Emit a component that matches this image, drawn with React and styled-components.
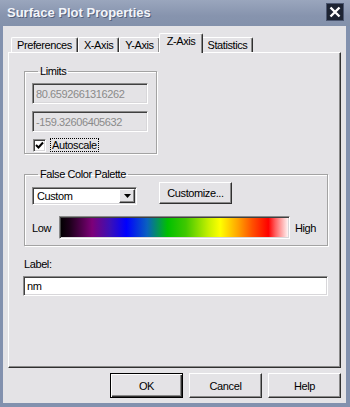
import React from 'react';
import styled, { createGlobalStyle, css } from 'styled-components';

const Global = createGlobalStyle`
  html, body { margin: 0; padding: 0; background: #8190ad; }
  body { font-family: "Liberation Sans", Arial, sans-serif; font-size: 11px; color: #000; }
  * { box-sizing: border-box; }
`;

const Window = styled.div`
  width: 350px;
  height: 407px;
  display: flex;
  flex-direction: column;
  background: #8291ae;
`;

const TitleBar = styled.div`
  height: 26px;
  flex: none;
  display: flex;
  align-items: center;
  justify-content: space-between;
  padding: 0 6px 2px 7px;
  background: linear-gradient(#9aa6bd, #8794ae 60%, #8391ab);
`;

const Title = styled.div`
  font: bold 13px "Liberation Sans", Arial, sans-serif;
  color: #f3f5fa;
  text-shadow: 1px 1px 0 #56627c;
`;

const CloseBtn = styled.div`
  width: 18px;
  height: 18px;
  background: #1d2433;
  border: 1px solid #4b5670;
  display: flex;
  align-items: center;
  justify-content: center;
`;

const Body = styled.div`
  flex: 1;
  margin: 0 4px 4px 3px;
  background: #e4e3e6;
  display: flex;
  flex-direction: column;
  padding: 7px 5px 5px 5px;
  letter-spacing: -0.4px;
`;

const TabRow = styled.div`
  height: 19px;
  flex: none;
  display: flex;
  align-items: flex-end;
  padding-left: 3px;
`;

const Tab = styled.div`
  height: 15px;
  padding: 0 5px;
  line-height: 14px;
  background: #e4e3e6;
  border-top: 1px solid #fff;
  border-left: 1px solid #fff;
  border-right: 1px solid #303030;
  box-shadow: inset -1px 0 #8a8a8a;
  border-radius: 2px 2px 0 0;
  white-space: nowrap;
  ${p => p.$active && css`
    height: 20px;
    margin: 0 -2px -1px -1px;
    padding: 0 7px 4px;
    line-height: 14px;
    position: relative;
    z-index: 1;
  `}
`;

const Panel = styled.div`
  flex: 1;
  border: 1px solid #fff;
  border-right-color: #303030;
  border-bottom-color: #303030;
  box-shadow: inset -1px -1px #8a8a8a;
  padding: 12px 13px 0 15px;
  display: flex;
  flex-direction: column;
  align-items: flex-start;
`;

const Group = styled.fieldset`
  margin: ${p => p.$mt || 0}px 0 0 0;
  width: ${p => p.$w}px;
  border: 1px solid #a3a3a3;
  box-shadow: inset 1px 1px #fff, 1px 1px #fff;
  padding: ${p => p.$pad};
  min-width: 0;
`;

const Legend = styled.legend`
  margin-left: 6px;
  padding: 0 2px;
  line-height: 12px;
  font-size: 11px;
`;

const Column = styled.div`
  display: flex;
  flex-direction: column;
  gap: ${p => p.$gap || 0}px;
`;

const Sunken = css`
  border: 1px solid;
  border-color: #8a8a8a #fff #fff #8a8a8a;
  box-shadow: inset 1px 1px #404040, inset -1px -1px #d8d7da;
`;

const TextBox = styled.div`
  ${Sunken}
  width: ${p => p.$w}px;
  height: ${p => p.$h}px;
  margin-left: ${p => p.$ml || 0}px;
  margin-top: ${p => p.$mt || 0}px;
  background: ${p => (p.$disabled ? '#e4e3e6' : '#fff')};
  color: ${p => (p.$disabled ? '#8a8a8a' : '#000')};
  display: flex;
  align-items: center;
  padding-left: 3px;
  font-size: 11px;
`;

const CheckRow = styled.div`
  display: flex;
  align-items: center;
  gap: 4px;
  margin-top: 6px;
  height: 14px;
  margin-left: 1px;
`;

const CheckBox = styled.div`
  ${Sunken}
  width: 13px;
  height: 13px;
  background: #fff;
  display: flex;
  align-items: center;
  justify-content: center;
`;

const FocusLabel = styled.span`
  border: 1px dotted #000;
  padding: 0 1px;
  line-height: 12px;
`;

const Row = styled.div`
  display: flex;
  align-items: ${p => p.$align || 'center'};
  margin-top: ${p => p.$mt || 0}px;
`;

const Select = styled.div`
  ${Sunken}
  width: 105px;
  height: 18px;
  margin-top: 5px;
  background: #fff;
  display: flex;
  align-items: center;
  justify-content: space-between;
  padding: 0 1px 0 4px;
  font-size: 11px;
`;

const ArrowBtn = styled.div`
  width: 16px;
  height: 14px;
  background: #e4e3e6;
  border: 1px solid;
  border-color: #fff #303030 #303030 #fff;
  box-shadow: inset -1px -1px #8a8a8a;
  display: flex;
  align-items: center;
  justify-content: center;
`;

const Button = styled.div`
  width: ${p => p.$w || 73}px;
  height: ${p => p.$h || 25}px;
  margin-left: ${p => p.$ml || 0}px;
  background: #e4e3e6;
  border: 1px solid;
  border-color: #fff #303030 #303030 #fff;
  box-shadow: inset -1px -1px #8a8a8a;
  display: flex;
  align-items: center;
  justify-content: center;
  font-size: 11px;
  ${p => p.$default && css`
    border: 1px solid #000;
    box-shadow: inset 1px 1px #fff, inset -1px -1px #303030, inset -2px -2px #8a8a8a;
  `}
`;

const SideLabel = styled.span`
  width: ${p => p.$w || 'auto'};
  margin-left: ${p => p.$ml || 0}px;
  font-size: 11px;
`;

const Gradient = styled.div`
  ${Sunken}
  width: 231px;
  height: 23px;
  background: linear-gradient(
    to right,
    #000 0%,
    #1a0018 4%,
    #7d0078 14%,
    #3a10b8 22%,
    #0000ff 29%,
    #0a60c0 38%,
    #00c000 47%,
    #40c800 55%,
    #c8f000 65%,
    #ffff00 70%,
    #ffa000 78%,
    #ff5000 84%,
    #ff0000 91%,
    #ff6060 94%,
    #ffffff 100%
  );
`;

const FieldLabel = styled.div`
  margin-top: 12px;
  font-size: 11px;
  line-height: 13px;
`;

const ButtonRow = styled.div`
  flex: none;
  height: 25px;
  margin-top: 5px;
  display: flex;
  justify-content: flex-end;
  gap: 6px;
`;

export default function App() {
  return (
    <>
      <Global />
      <Window>
        <TitleBar>
          <Title>Surface Plot Properties</Title>
          <CloseBtn>
            <svg width="12" height="12" viewBox="0 0 12 12">
              <path d="M1.5 1.5 L10.5 10.5 M10.5 1.5 L1.5 10.5" stroke="#fff" strokeWidth="2.4" />
            </svg>
          </CloseBtn>
        </TitleBar>
        <Body>
          <TabRow>
            <Tab>Preferences</Tab>
            <Tab>X-Axis</Tab>
            <Tab>Y-Axis</Tab>
            <Tab $active>Z-Axis</Tab>
            <Tab>Statistics</Tab>
          </TabRow>
          <Panel>
            <Group $w={133} $pad="6px 7px 1px 7px">
              <Legend>Limits</Legend>
              <Column $gap={7}>
                <TextBox $disabled $w={116} $h={21}>80.6592661316262</TextBox>
                <TextBox $disabled $w={116} $h={21}>-159.32606405632</TextBox>
              </Column>
              <CheckRow>
                <CheckBox>
                  <svg width="9" height="9" viewBox="0 0 9 9">
                    <path d="M1 4 L3.5 6.5 L8 1.5" stroke="#000" strokeWidth="2" fill="none" />
                  </svg>
                </CheckBox>
                <FocusLabel>Autoscale</FocusLabel>
              </CheckRow>
            </Group>
            <Group $w={304} $mt={14} $pad="2px 7px 6px 7px">
              <Legend>False Color Palette</Legend>
              <Row $align="flex-start">
                <Select>
                  <span>Custom</span>
                  <ArrowBtn>
                    <svg width="7" height="4" viewBox="0 0 7 4">
                      <path d="M0 0 H7 L3.5 4 Z" fill="#000" />
                    </svg>
                  </ArrowBtn>
                </Select>
                <Button $w={73} $h={22} $ml={22}>Customize...</Button>
              </Row>
              <Row $mt={11}>
                <SideLabel $w="27px">Low</SideLabel>
                <Gradient />
                <SideLabel $ml={5}>High</SideLabel>
              </Row>
            </Group>
            <FieldLabel>Label:</FieldLabel>
            <TextBox $w={305} $h={20} $ml={-1} $mt={5}>nm</TextBox>
          </Panel>
          <ButtonRow>
            <Button $default>OK</Button>
            <Button>Cancel</Button>
            <Button>Help</Button>
          </ButtonRow>
        </Body>
      </Window>
    </>
  );
}
